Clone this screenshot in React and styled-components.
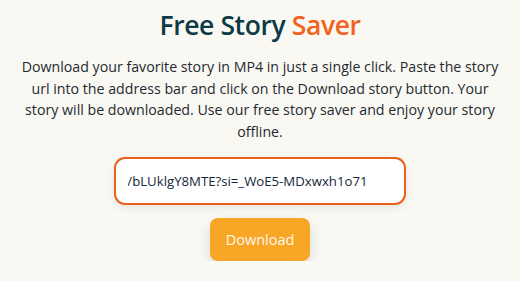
import React, { useEffect, useRef } from 'react';
import styled, { createGlobalStyle } from 'styled-components';

const GlobalStyle = createGlobalStyle`
    html, body {
        margin: 0;
        padding: 0;
        background: #f9f8f3;
    }
    body {
        font-family: "Open Sans", "Noto Sans", sans-serif;
    }
`;

const Page = styled.main`
    display: flex;
    flex-direction: column;
    align-items: center;
    padding: 6px 14px 0;
`;

const Title = styled.h1`
    margin: 0;
    font-size: 26.5px;
    font-weight: 600;
    line-height: 38px;
    letter-spacing: -0.4px;
    color: #0d3a47;
`;

const Accent = styled.span`
    color: #f2631d;
`;

const Intro = styled.p`
    margin: 12px 0 0;
    max-width: 488px;
    text-align: center;
    font-size: 14.2px;
    line-height: 21.7px;
    color: #1f2a30;
`;

const Field = styled.input`
    box-sizing: border-box;
    margin-top: 14px;
    width: 292px;
    height: 48px;
    padding: 0 37px 0 12px;
    border: 2px solid #e8621e;
    border-radius: 11px;
    background: #ffffff;
    box-shadow: 0 3px 8px rgba(0, 0, 0, 0.08);
    font-family: inherit;
    font-size: 13.2px;
    color: #14283a;
    outline: none;
    caret-color: #14283a;
`;

const DownloadButton = styled.button`
    margin-top: 13px;
    width: 100px;
    height: 43px;
    border: none;
    border-radius: 8px;
    background: #f9a526;
    color: #fff8ec;
    font-family: inherit;
    font-size: 14.5px;
    box-shadow: 0 6px 14px rgba(0, 0, 0, 0.12);
    cursor: pointer;
`;

const url = 'https://youtu.be/bLUklgY8MTE?si=_WoE5-MDxwxh1o71';

const App = () => {
    const fieldRef = useRef(null);

    useEffect(() => {
        const el = fieldRef.current;
        if (el) {
            el.focus();
            el.setSelectionRange(url.length, url.length);
            el.scrollLeft = el.scrollWidth;
        }
    }, []);

    return (
        <>
            <GlobalStyle />
            <Page>
                <Title>
                    Free Story <Accent>Saver</Accent>
                </Title>
                <Intro>
                    Download your favorite story in MP4 in just a single click. Paste the story url into the
                    address bar and click on the Download story button. Your story will be downloaded. Use our
                    free story saver and enjoy your story offline.
                </Intro>
                <Field ref={fieldRef} defaultValue={url} />
                <DownloadButton>Download</DownloadButton>
            </Page>
        </>
    );
};

export default App;
